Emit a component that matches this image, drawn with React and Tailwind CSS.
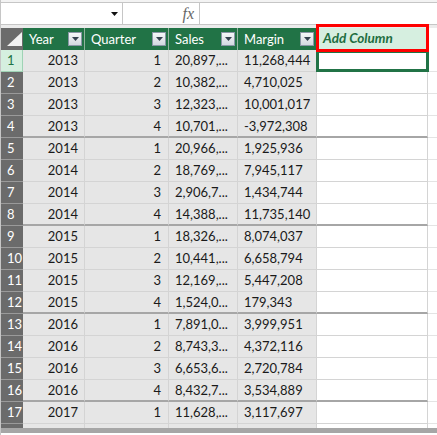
import React from "react";

const data = [
  [2013, 1, "20,897,...", "11,268,444"],
  [2013, 2, "10,382,...", "4,710,025"],
  [2013, 3, "12,323,...", "10,001,017"],
  [2013, 4, "10,701,...", "-3,972,308"],
  [2014, 1, "20,966,...", "1,925,936"],
  [2014, 2, "18,769,...", "7,945,117"],
  [2014, 3, "2,906,7...", "1,434,744"],
  [2014, 4, "14,388,...", "11,735,140"],
  [2015, 1, "18,326,...", "8,074,037"],
  [2015, 2, "10,441,...", "6,658,794"],
  [2015, 3, "12,169,...", "5,447,208"],
  [2015, 4, "1,524,0...", "179,343"],
  [2016, 1, "7,891,0...", "3,999,951"],
  [2016, 2, "8,743,3...", "4,372,116"],
  [2016, 3, "6,653,6...", "2,720,784"],
  [2016, 4, "8,432,7...", "3,534,889"],
  [2017, 1, "11,628,...", "3,117,697"],
  ["", "", "", ""],
];

function FilterButton() {
  return (
    <span className="flex h-[14px] w-[14px] items-center justify-center border border-[#8a97a6] bg-linear-to-b from-[#f5f7f9] to-[#d3d9e0]">
      <svg width="7" height="4" viewBox="0 0 7 4">
        <polygon points="0,0 7,0 3.5,4" fill="#34414f" />
      </svg>
    </span>
  );
}

function HeaderCell({ label, w }) {
  return (
    <div
      className={`flex h-full items-center justify-between border-r border-[#8fb39d] bg-[#217346] pl-[6px] pr-[2px] text-white ${w}`}
    >
      <span>{label}</span>
      <FilterButton />
    </div>
  );
}

function DataRow({ row, index }) {
  const [year, q, sales, margin] = row;
  const n = index + 1;
  const selected = n === 1;
  const groupEnd = q === 4;
  const b = groupEnd ? "border-b-2 border-b-[#a6a6a6]" : "border-b border-b-[#d4d4d4]";
  const cell = `flex h-full items-center border-r border-r-[#d4d4d4] bg-[#e6e6e6] text-[#1a1a1a] ${b}`;
  return (
    <div className="flex h-[22px]">
      <div
        className={`flex h-full w-[22px] items-center pl-[6px] ${
          selected
            ? "border-r border-r-[#9fd3b5] border-b border-b-[#9fd3b5] bg-[#d5efdf] text-[#217346]"
            : "border-b border-b-[#9a9a9a] bg-[#6b6b6b] text-white"
        }`}
      >
        {year === "" ? "" : n}
      </div>
      <div className={`${cell} w-[62px] justify-end pr-[6px]`}>{year}</div>
      <div className={`${cell} w-[84px] justify-end pr-[7px]`}>{q}</div>
      <div className={`${cell} w-[69px] pl-[6px]`}>{sales}</div>
      <div className={`${cell} w-[79px] pl-[6px]`}>{margin}</div>
      <div
        className={`relative h-full w-[111px] border-r border-r-[#d4d4d4] bg-white ${b}`}
      >
        {selected && (
          <div className="absolute -bottom-[1px] -left-[1px] -right-[2px] top-0 border-[3px] border-[#217346]" />
        )}
      </div>
      <div className="h-full flex-1 border-b border-b-[#e4e4e4] bg-white" />
    </div>
  );
}

export default function App() {
  return (
    <div className="h-[435px] w-[437px] overflow-hidden border-l border-[#c6c6c6] bg-white font-['Lato','Open_Sans',sans-serif] text-[13px] leading-none">
      <div className="h-[2px] bg-[#f3f3f3]" />
      <div className="flex h-[23px] border-y border-[#c6c6c6] bg-white">
        <div className="flex w-[122px] items-center justify-end border-r border-[#c6c6c6] pr-[4px]">
          <svg width="7" height="4" viewBox="0 0 7 4">
            <polygon points="0,0 7,0 3.5,4" fill="#111" />
          </svg>
        </div>
        <div className="flex w-[77px] items-center justify-end border-r border-[#c6c6c6] pr-[5px]">
          <span className="font-['Liberation_Serif',serif] text-[16px] italic text-[#666]">fx</span>
        </div>
        <div className="flex-1" />
      </div>
      <div className="h-[3px] bg-[#ececec]" />
      <div className="flex h-[22px]">
        <div className="h-full w-[22px] bg-[#6b6b6b]">
          <svg width="22" height="22" viewBox="0 0 22 22">
            <polygon points="6,18 21,18 21,4" fill="#f2f2f2" />
          </svg>
        </div>
        <HeaderCell label="Year" w="w-[62px]" />
        <HeaderCell label="Quarter" w="w-[84px]" />
        <HeaderCell label="Sales" w="w-[69px]" />
        <HeaderCell label="Margin" w="w-[79px]" />
        <div className="relative flex h-full w-[111px] items-center border-r border-[#d4d4d4] bg-[#d6efe0] pl-[6px] text-[13.5px] font-bold italic text-[#1f6e40]">
          Add Column
          <div className="absolute -bottom-[2px] -left-[1px] -right-[2px] -top-[4px] z-10 border-[3px] border-[#ff0000]" />
        </div>
        <div className="h-full flex-1 bg-white" />
      </div>
      <div className="h-[378px] overflow-hidden">
        {data.map((row, i) => (
          <DataRow key={i} row={row} index={i} />
        ))}
      </div>
      <div className="h-[5px] bg-[#a6a6a6]" />
      <div className="h-[2px] bg-white" />
    </div>
  );
}
